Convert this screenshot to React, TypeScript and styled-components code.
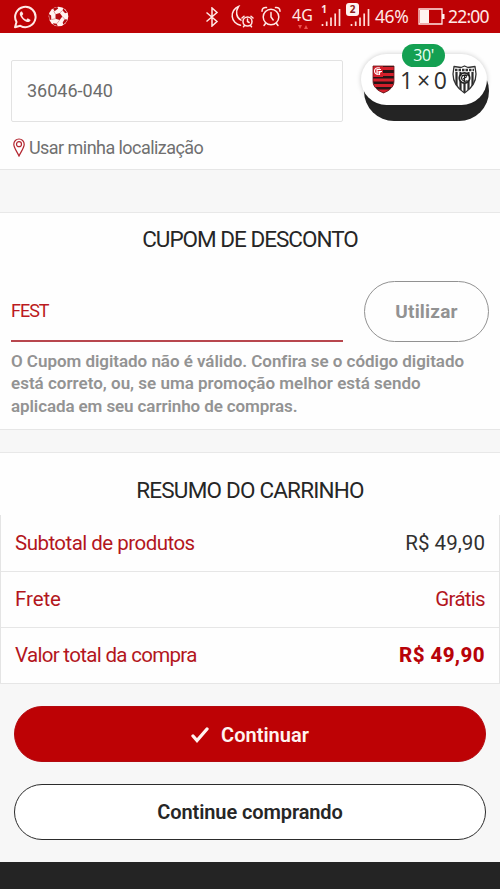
import React from 'react';
import styled, { createGlobalStyle } from 'styled-components';

const red = '#bd0205';

const GlobalStyle = createGlobalStyle`
  * { box-sizing: border-box; }
  body { margin: 0; background: #f7f7f7; font-family: Roboto, "Liberation Sans", sans-serif; }
`;

const Page = styled.div`
  position: relative;
  display: flex;
  flex-direction: column;
  width: 500px;
  height: 889px;
  overflow: hidden;
  background: #f7f7f7;
`;

const StatusBar = styled.header`
  display: flex;
  align-items: center;
  height: 33px;
  flex: none;
  padding: 0 10px 0 13px;
  background: ${red};
  color: #ffe9e6;
  font-family: "Noto Sans", sans-serif;
`;

const StatusIcon = styled.svg<{ $gap?: number }>`
  flex: none;
  display: block;
  margin-left: ${(p) => p.$gap ?? 0}px;
`;

const Spacer = styled.div`
  flex: 1;
`;

const StatusText = styled.span<{ $gap: number; $spacing: number; $width: number }>`
  flex: none;
  width: ${(p) => p.$width}px;
  margin-left: ${(p) => p.$gap}px;
  font-size: 17.5px;
  line-height: 33px;
  letter-spacing: ${(p) => p.$spacing}px;
  white-space: nowrap;
`;

const Section = styled.section<{ $height: number }>`
  flex: none;
  height: ${(p) => p.$height}px;
  background: #fefefe;
  border-bottom: 1px solid #e6e6e6;
`;

const Divider = styled.div<{ $height: number }>`
  flex: none;
  height: ${(p) => p.$height}px;
  border-bottom: 1px solid #e8e8e8;
`;

const AddressSection = styled(Section)`
  padding: 27px 11px 0;
`;

const AddressRow = styled.div`
  display: flex;
  justify-content: space-between;
  height: 62px;
`;

const ZipField = styled.div`
  display: flex;
  align-items: center;
  width: 332px;
  height: 62px;
  padding: 0 0 1px 15px;
  border: 1px solid #e2e2e2;
  border-radius: 2px;
  color: #6c6c6c;
  font-size: 18px;
`;

const CalculateButton = styled.div`
  width: 125px;
  height: 60px;
  margin-top: 1px;
  border-radius: 30px;
  background: #242424;
`;

const LocationLink = styled.div`
  display: flex;
  align-items: center;
  gap: 4px;
  height: 22px;
  margin-top: 14px;
  padding-left: 2px;
  color: #707070;
  font-size: 18px;
  letter-spacing: -0.55px;
  white-space: nowrap;
`;

const Title = styled.h2<{ $spacing: number }>`
  margin: 0;
  font-size: 22.5px;
  font-weight: 400;
  line-height: 28px;
  letter-spacing: ${(p) => p.$spacing}px;
  text-align: center;
  color: #262626;
  white-space: nowrap;
`;

const CouponSection = styled(Section)`
  padding: 12px 11px 0;
`;

const CouponRow = styled.div`
  display: flex;
  justify-content: space-between;
  height: 61px;
  margin-top: 28px;
`;

const CouponField = styled.div`
  display: flex;
  align-items: center;
  width: 332px;
  height: 61px;
  border-bottom: 2px solid #b8474e;
  color: #bb1a20;
  font-size: 18px;
  letter-spacing: -1px;
`;

const UseButton = styled.button`
  width: 125px;
  height: 61px;
  padding: 0;
  border: 1px solid #929292;
  border-radius: 31px;
  background: transparent;
  color: #929292;
  font: 700 19px Roboto, sans-serif;
  letter-spacing: 0.2px;
`;

const CouponMessage = styled.p`
  margin: 8px 0 0;
  font-size: 17px;
  font-weight: 600;
  line-height: 22.3px;
  color: #939393;
  white-space: nowrap;
`;

const MessageLine = styled.span<{ $spacing: number }>`
  display: block;
  letter-spacing: ${(p) => p.$spacing}px;
`;

const SummarySection = styled(Section)`
  padding-top: 23px;
`;

const SummaryTable = styled.div`
  margin-top: 11px;
  border: solid #e4e4e4;
  border-width: 0 1px;
`;

const SummaryRow = styled.div`
  display: flex;
  align-items: center;
  justify-content: space-between;
  height: 56px;
  padding: 0 14px;
  font-size: 20.5px;
  & + & { border-top: 1px solid #e6e6e6; padding-bottom: 1px; }
`;

const SummaryText = styled.span<{ $tone: string; $spacing: number; $bold?: boolean }>`
  color: ${(p) => p.$tone};
  font-weight: ${(p) => (p.$bold ? 800 : 400)};
  letter-spacing: ${(p) => p.$spacing}px;
  white-space: nowrap;
`;

const Actions = styled.div`
  display: flex;
  flex-direction: column;
  gap: 22px;
  flex: none;
  height: 178px;
  padding: 22px 14px 0;
`;

const ActionButton = styled.button<{ $primary?: boolean; $spacing: number }>`
  display: flex;
  align-items: center;
  justify-content: center;
  gap: 12px;
  flex: none;
  height: 56px;
  padding: ${(p) => (p.$primary ? '2px' : '0')} 0 0;
  border: 1px solid ${(p) => (p.$primary ? '#b30a10' : '#2c2c2c')};
  border-radius: 28px;
  background: ${(p) => (p.$primary ? red : '#ffffff')};
  color: ${(p) => (p.$primary ? '#fff3f0' : '#262626')};
  font: 600 20px Roboto, sans-serif;
  letter-spacing: ${(p) => p.$spacing}px;
`;

const Footer = styled.footer`
  flex: 1;
  background: #242424;
`;

const ScoreBubble = styled.aside`
  position: absolute;
  left: 361px;
  top: 54px;
  display: flex;
  align-items: center;
  width: 126px;
  height: 51px;
  padding-left: 11px;
  border-radius: 26px;
  background: #ffffff;
  box-shadow: 0 0 5px rgba(0, 0, 0, 0.2);
`;

const Score = styled.div`
  display: flex;
  align-items: center;
  justify-content: space-between;
  width: 47px;
  margin: 0 5px 0 5px;
  font: 400 23px/28px "Open Sans", sans-serif;
  color: #303030;
`;

const MatchTime = styled.div`
  position: absolute;
  left: 41px;
  top: -10px;
  width: 43px;
  height: 23px;
  border-radius: 12px;
  background: #14a052;
  color: #eafff2;
  font: 400 16px/22px "Open Sans", sans-serif;
  letter-spacing: -0.4px;
  text-align: center;
`;

function WhatsAppIcon() {
  return (
    <StatusIcon width="24" height="24" viewBox="0 0 24 24">
      <path d="M2 22.3 3.5 17A10.2 10.2 0 1 1 7.3 20.8Z" fill="none" stroke="#ffe9e6" strokeWidth="2" strokeLinejoin="round" />
      <path d="M8 6.500c-1.400 1-1.600 2.800-.6 4.600 1.500 2.900 3.700 4.900 6.500 5.800 1.800.5 3.200-.3 3.700-2l-2.900-1.700-1.400 1.500c-2-.8-3.300-2.100-4.200-4L10.300 9 9 6.400Z" fill="#ffe9e6" />
    </StatusIcon>
  );
}

function BallIcon() {
  return (
    <StatusIcon $gap={11} width="21" height="21" viewBox="0 0 21 21">
      <circle cx="10.5" cy="10.5" r="9.800" fill="#fff3f0" />
      <g fill="#b50b10">
        <path d="m7.500 8.200 4.300-1.300 2.500 3.600-2.600 3.600-4.200-1.400Z" />
        <path d="m5 2.600 4.200-1.700 1 1.500-3.600 2.800ZM15.200 2.300l4 4.200-2.100.8-2.500-2.800ZM.9 8l2.200 1.600.2 4-1.700.3ZM5.300 17.300l3.400.5 1 2.100C7.600 19.900 6 19 5 18ZM16.600 13.200l2.800.3c-.9 2.300-2.300 3.900-4.200 4.900l-.5-2Z" />
      </g>
      <path d="M7.500 8.200 5.600 5M11.800 6.900l2.800-2.400M14.300 10.500l2.400 2.700M11.700 14.100l-3 3.700M7.500 12.700l-4.200.9" stroke="#d77a78" strokeWidth=".7" />
    </StatusIcon>
  );
}

function BluetoothIcon() {
  return (
    <StatusIcon width="14" height="20" viewBox="0 0 14 20">
      <path d="m1.500 5.500 10.500 9-5 4.500V1l5 4.500-10.500 9" fill="none" stroke="#ffe9e6" strokeWidth="1.500" />
    </StatusIcon>
  );
}

function MoonAlarmIcon() {
  return (
    <StatusIcon $gap={10} width="25" height="23" viewBox="0 0 25 23">
      <g fill="none" stroke="#ffe9e6" strokeWidth="1.500" strokeLinecap="round">
        <path d="M11.500 20.200A9.700 9.700 0 0 1 9.500 1.500C6.200 6.500 7.200 12.600 12 15.200" />
        <circle cx="18.500" cy="16.500" r="4.500" />
        <path d="M18.500 14v2.500l1.600 1M13 13l2-1.700M22 11.300l2 1.700M15.500 20.500l-1 1.300M21.500 20.500l1 1.300" />
      </g>
    </StatusIcon>
  );
}

function AlarmIcon() {
  return (
    <StatusIcon $gap={7} width="20" height="21" viewBox="0 0 20 21">
      <g fill="none" stroke="#ffe9e6" strokeWidth="1.500" strokeLinecap="round">
        <circle cx="10" cy="11" r="7.800" />
        <path d="M10 6.500V11l2.200 3M1 5.200C1 2.500 3 1 5.500 1.500M14.500 1.500C17 1 19 2.500 19 5.200M4.500 17.500 3 19.500M15.500 17.500l1.500 2" />
      </g>
    </StatusIcon>
  );
}

const NetworkType = styled.div`
  display: flex;
  flex-direction: column;
  align-items: center;
  width: 21px;
  height: 24px;
  margin-left: 11px;
  font-size: 16px;
  line-height: 20px;
`;

const SignalGroup = styled.div<{ $gap: number }>`
  position: relative;
  display: flex;
  align-items: flex-end;
  justify-content: flex-end;
  width: 20px;
  height: 25px;
  margin: 0 0 5px ${(p) => p.$gap}px;
`;

const SimNumber = styled.span<{ $boxed?: boolean }>`
  position: absolute;
  left: ${(p) => (p.$boxed ? '-4px' : '0')};
  top: 1px;
  width: ${(p) => (p.$boxed ? '13px' : '6px')};
  height: 13px;
  border-radius: 3px;
  background: ${(p) => (p.$boxed ? '#fff3f0' : 'transparent')};
  color: ${(p) => (p.$boxed ? '#8e2020' : '#ffe9e6')};
  font-size: 10px;
  font-weight: 700;
  line-height: 12px;
  text-align: center;
`;

function Signal({ sim, gap, boxed }: { sim: string; gap: number; boxed?: boolean }) {
  return (
    <SignalGroup $gap={gap}>
      <StatusIcon width="20" height="18" viewBox="0 0 20 18">
        <path d="M1.500 15v2M5.700 12.500V17M10 8.500V17M14.200 4.500V17M18.500 0V17" stroke="#ffdcd8" strokeWidth="1.700" />
      </StatusIcon>
      <SimNumber $boxed={boxed}>{sim}</SimNumber>
    </SignalGroup>
  );
}

function FlamengoCrest() {
  return (
    <StatusIcon width="23" height="29" viewBox="0 0 23 29">
      <clipPath id="shield"><path d="M1 1h21v15c0 6-4.500 9.500-10.500 12C5.500 25.500 1 22 1 16Z" /></clipPath>
      <g clipPath="url(#shield)">
        <path d="M0 0h23v29H0Z" fill="#251516" />
        <path d="M11 3.500h12M11 9.500h12M0 15h23M0 20.500h23M0 26h23" stroke="#d51f2b" strokeWidth="2.900" />
        <path d="M0 0h11v12H0Z" fill="#d51f2b" />
        <path d="M8 3C4 2 2.500 4 2.500 6s1.500 4 4.500 3M5 10V4.500h4M5 7h4M7.500 10V6.500H10" fill="none" stroke="#fff" strokeWidth="1.100" />
      </g>
      <path d="M1 1h21v15c0 6-4.500 9.500-10.500 12C5.500 25.500 1 22 1 16Z" fill="none" stroke="#6d191d" strokeWidth=".8" />
    </StatusIcon>
  );
}

function StripedCrest() {
  return (
    <StatusIcon width="25" height="29" viewBox="0 0 25 29">
      <clipPath id="striped"><path d="M12.500 1 16 2.500 23 1.500 24 9c0 8-4 14-11.500 19C5 23 1 17 1 9l1-7.500 7 1Z" /></clipPath>
      <g clipPath="url(#striped)">
        <path d="M0 0h25v29H0Z" fill="#fff" />
        <path d="M4.500 7v20M8.500 7v20M12.500 17v11M16.500 7v20M20.500 7v20" stroke="#2b2b2b" strokeWidth="2.200" />
        <path d="M3 5h19" stroke="#333" strokeWidth="2.500" strokeDasharray="2.500 1" />
        <circle cx="12.500" cy="13" r="5.200" fill="#fff" stroke="#222" strokeWidth="1.800" />
        <path d="M15.500 10.500c-3-2-6 .5-6 2.500s3 4.500 6 2.500M9.500 10.500h6M12.500 10.500V17M11 14l4-2.500" fill="none" stroke="#222" strokeWidth="1.200" />
      </g>
      <path d="M12.500 1 16 2.500 23 1.500 24 9c0 8-4 14-11.500 19C5 23 1 17 1 9l1-7.500 7 1Z" fill="none" stroke="#333" strokeWidth="1.300" strokeLinejoin="round" />
    </StatusIcon>
  );
}

export default function App() {
  return (
    <>
      <GlobalStyle />
      <Page>
        <StatusBar>
          <WhatsAppIcon />
          <BallIcon />
          <Spacer />
          <BluetoothIcon />
          <MoonAlarmIcon />
          <AlarmIcon />
          <NetworkType>
            4G
            <StatusIcon width="12" height="4" viewBox="0 0 12 4">
              <path d="M1 0h4L3 4ZM7 4h4L9 0Z" fill="#ec5350" />
            </StatusIcon>
          </NetworkType>
          <Signal sim="1" gap={8} />
          <Signal sim="2" gap={9} boxed />
          <StatusText $gap={5} $spacing={-0.4} $width={35}>46%</StatusText>
          <StatusIcon $gap={8} width="27" height="17" viewBox="0 0 27 17">
            <path d="M1 1h23v15H1Z" fill="none" stroke="#ffe9e6" strokeWidth="1.300" />
            <path d="M2 2h9v13H2ZM24 6h2.500v5H24Z" fill="#fff3f0" />
          </StatusIcon>
          <StatusText $gap={3} $spacing={-0.8} $width={42}>22:00</StatusText>
        </StatusBar>

        <AddressSection $height={137}>
          <AddressRow>
            <ZipField>36046-040</ZipField>
            <CalculateButton />
          </AddressRow>
          <LocationLink>
            <StatusIcon width="12" height="19" viewBox="0 0 12 19">
              <path d="M6 18C4 13.500 .8 9.800 .8 6.200a5.200 5.200 0 0 1 10.400 0C11.200 9.800 8 13.500 6 18Z" fill="none" stroke="#b32630" strokeWidth="1.200" />
              <circle cx="6" cy="6.200" r="2.500" fill="none" stroke="#b32630" strokeWidth="1.200" />
            </StatusIcon>
            Usar minha localização
          </LocationLink>
        </AddressSection>
        <Divider $height={43} />

        <CouponSection $height={217}>
          <Title $spacing={-1}>CUPOM DE DESCONTO</Title>
          <CouponRow>
            <CouponField>FEST</CouponField>
            <UseButton>Utilizar</UseButton>
          </CouponRow>
          <CouponMessage>
            <MessageLine $spacing={-0.04}>O Cupom digitado não é válido. Confira se o código digitado</MessageLine>
            <MessageLine $spacing={0}>está correto, ou, se uma promoção melhor está sendo</MessageLine>
            <MessageLine $spacing={-0.1}>aplicada em seu carrinho de compras.</MessageLine>
          </CouponMessage>
        </CouponSection>
        <Divider $height={23} />

        <SummarySection $height={231}>
          <Title $spacing={-0.8}>RESUMO DO CARRINHO</Title>
          <SummaryTable>
            <SummaryRow>
              <SummaryText $tone="#b3161d" $spacing={-0.53}>Subtotal de produtos</SummaryText>
              <SummaryText $tone="#303030" $spacing={0.05}>R$ 49,90</SummaryText>
            </SummaryRow>
            <SummaryRow>
              <SummaryText $tone="#b3161d" $spacing={-0.1}>Frete</SummaryText>
              <SummaryText $tone="#b3161d" $spacing={-0.7}>Grátis</SummaryText>
            </SummaryRow>
            <SummaryRow>
              <SummaryText $tone="#b3161d" $spacing={-0.68}>Valor total da compra</SummaryText>
              <SummaryText $tone="#b80309" $spacing={0.4} $bold>R$ 49,90</SummaryText>
            </SummaryRow>
          </SummaryTable>
        </SummarySection>

        <Actions>
          <ActionButton $primary $spacing={0}>
            <StatusIcon width="18" height="16" viewBox="0 0 18 16">
              <path d="m2 9 4 4.500L16 2" fill="none" stroke="#fff3f0" strokeWidth="3.300" strokeLinecap="round" />
            </StatusIcon>
            Continuar
          </ActionButton>
          <ActionButton $spacing={-0.1}>Continue comprando</ActionButton>
        </Actions>
        <Footer />

        <ScoreBubble>
          <FlamengoCrest />
          <Score><span>1</span><span>×</span><span>0</span></Score>
          <StripedCrest />
          <MatchTime>30'</MatchTime>
        </ScoreBubble>
      </Page>
    </>
  );
}
